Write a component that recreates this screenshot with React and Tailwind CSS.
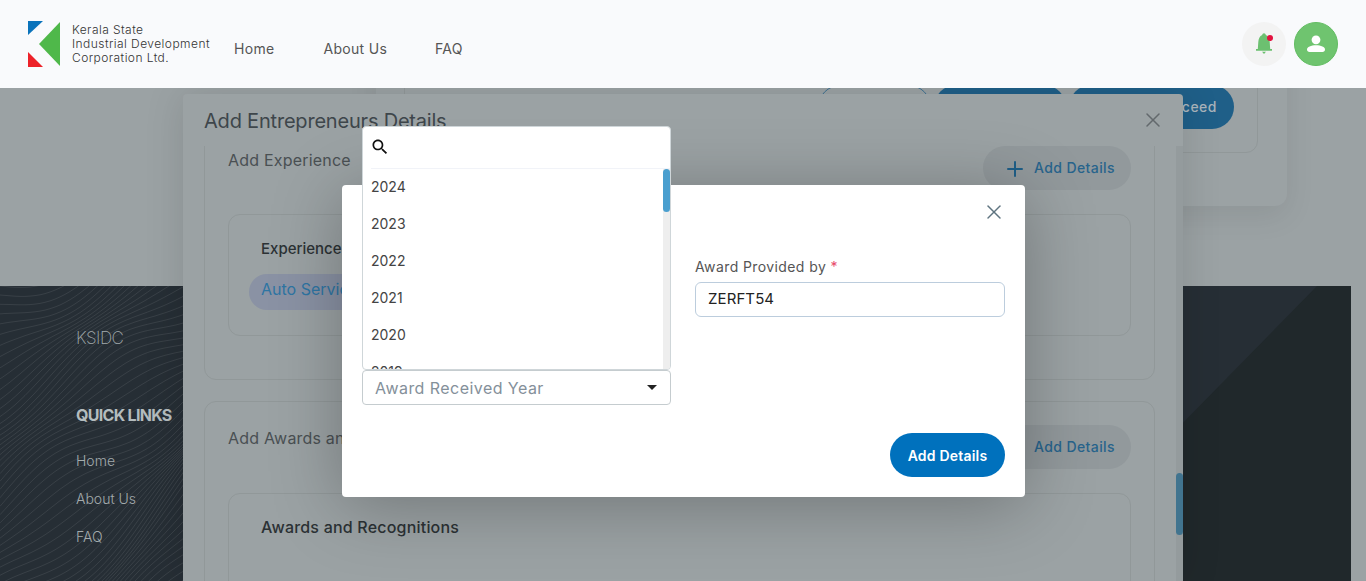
import { X, Plus } from 'lucide-react'

const years = ['2024', '2023', '2022', '2021', '2020', '2019']

// contour lines behind the footer links
const contourLines = () => {
  const lines = []
  for (let i = -4; i < 66; i++) {
    const base = i * 8.5
    let d = ''
    for (let x = 0; x <= 190; x += 5) {
      const slope = 0.42 + 0.6 * Math.min(base / 400, 1)
      const y = base - slope * x + 16 * Math.sin((x + base * 0.9) / 52) + 5 * Math.sin((x - base) / 23)
      d += `${x === 0 ? 'M' : 'L'}${x} ${y.toFixed(1)} `
    }
    lines.push(d)
  }
  return lines
}

const Header = () => (
  <header className="relative z-30 flex h-[88px] shrink-0 items-center bg-[#f9fafc] pl-[28px] pr-[28px]">
    <svg width="32" height="46" viewBox="0 0 32 46" className="shrink-0">
      <polygon points="0,0 15,0 0,14" fill="#0a73bb" />
      <polygon points="32,1 11,23 32,45" fill="#4fb84a" />
      <polygon points="0,31 15,46 0,46" fill="#ed2229" />
    </svg>
    <div className="ml-[12px] w-[150px] text-[12px] font-light leading-[14px] tracking-[0.44px] text-[#333]">
      <div>Kerala State</div>
      <div className="whitespace-nowrap">Industrial Development</div>
      <div>Corporation Ltd.</div>
    </div>
    <nav className="ml-[12px] flex gap-[48px] pt-[8px] text-[14px] tracking-[0.3px] text-[#555]">
      <span>Home</span>
      <span className="ml-[1px]">About Us</span>
      <span>FAQ</span>
    </nav>
    <div className="ml-auto flex items-center gap-[8px]">
      <div className="relative flex h-[44px] w-[44px] items-center justify-center rounded-full bg-[#f3f3f3]">
        <svg width="24" height="24" viewBox="0 0 24 24" fill="#6cc070">
          <path d="M12 1.3c-1 0-1.6.8-1.8 1.7C7.6 4 6.5 6.8 6.3 10L5.8 17H4v1.7h16V17h-1.8l-.5-7c-.2-3.2-1.3-6-3.9-7-.2-.9-.8-1.7-1.8-1.7zM10 19.7h4l-2 2.3z" />
        </svg>
        <span className="absolute left-[25px] top-[13px] h-[6px] w-[6px] rounded-full bg-[#e3123f]" />
      </div>
      <div className="flex h-[44px] w-[44px] items-center justify-center rounded-full border border-[#62bd62] bg-[#6fc46f]">
        <svg width="20" height="20" viewBox="0 0 20 20" fill="#fff">
          <circle cx="10" cy="5.8" r="4.4" />
          <path d="M1 15.5c0-2.6 4-4.2 9-4.2s9 1.6 9 4.2c0 1.6-1 2.5-2.5 2.5h-13C2 18 1 17.1 1 15.5z" />
        </svg>
      </div>
    </div>
  </header>
)

const PageBehind = () => (
  <main className="flex h-[198px] shrink-0 items-end justify-end pb-[80px] pr-[79px]">
    <div className="flex h-[200px] w-[911px] shrink-0 justify-end rounded-[12px] bg-[#9ba2a4] pr-[29px] shadow-[0_10px_30px_rgba(0,0,0,0.08)]">
      <div className="flex h-[147px] w-[854px] items-end justify-end gap-[3px] rounded-b-[12px] border border-[#919899] pb-[23px] pr-[23px]">
        <div className="h-[44px] w-[113px] rounded-full border border-[#3e7192]" />
        <div className="h-[44px] w-[132px] rounded-full bg-[#1f5f88]" />
        <div className="flex h-[44px] w-[165px] items-center justify-end rounded-full bg-[#1f5f88] pb-[2px] pr-[17px] text-[14px] font-medium tracking-[0.5px] text-[#a9b4bb]">
          Save &amp; Proceed
        </div>
      </div>
    </div>
  </main>
)

const Footer = () => (
  <footer className="relative mr-[15px] flex-1 overflow-hidden bg-[#262e35] pl-[76px] pt-[41px]">
    <svg className="absolute inset-0 h-full w-full" viewBox="0 0 1351 295" preserveAspectRatio="none">
      <polygon points="1317,0 1351,0 1351,295 1028,295" fill="#20282b" />
      {contourLines().map((d, i) => (
        <path key={i} d={d} fill="none" stroke="#ffffff" strokeOpacity="0.11" strokeWidth="0.8" />
      ))}
    </svg>
    <div className="relative">
      <div className="text-[17px] font-extralight leading-[22px] tracking-[-0.5px] text-[#a3abad]">KSIDC</div>
      <div className="mt-[55px] text-[16px] font-bold leading-[22px] tracking-[-0.7px] text-[#b4bcbe]">QUICK LINKS</div>
      <ul className="mt-[25px] flex flex-col gap-[18px] text-[14px] font-light leading-[20px] text-[#a3abad]">
        <li>Home</li>
        <li>About Us</li>
        <li>FAQ</li>
      </ul>
    </div>
  </footer>
)

const AddButton = () => (
  <div className="flex h-[44px] w-[148px] items-center gap-[7px] rounded-full bg-[#92999c] pl-[20px] text-[14px] font-medium tracking-[0.4px] text-[#28648c]">
    <Plus size={24} strokeWidth={2} className="mt-[2px] text-[#1f5f88]" />
    <span className="pb-[2px]">Add Details</span>
  </div>
)

const EntrepreneursModal = () => (
  <div className="absolute left-[183px] top-[94px] z-10 flex h-[487px] w-[1000px] flex-col rounded-t-[4px] bg-[#9ba2a4] shadow-[0_0_40px_rgba(0,0,0,0.12)]">
    <div className="flex h-[52px] shrink-0 items-center justify-between pl-[21px] pr-[18px]">
      <h2 className="pt-[1px] text-[20px] leading-[52px] tracking-[-0.2px] text-[#3e464b]">Add Entrepreneurs Details</h2>
      <X size={24} strokeWidth={1.5} className="text-[#63696d]" />
    </div>
    <div className="relative flex-1 overflow-hidden pl-[21px] pr-[28px]">
      <div className="absolute bottom-0 right-0 top-0 w-[7px] bg-[#949b9d]" />
      <div className="absolute right-0 top-[327px] h-[62px] w-[7px] rounded-full bg-[#41748f]" />

      <section className="mt-[-26px] h-[260px] rounded-[12px] border border-[#919899] px-[23px] pt-[25px]">
        <div className="flex items-start justify-between">
          <span className="mt-[2px] text-[16px] leading-[24px] tracking-[0.2px] text-[#4a5053]">Add Experience</span>
          <AddButton />
        </div>
        <div className="mt-[24px] h-[122px] rounded-[12px] border border-[#919899] pl-[20px] pt-[23px]">
          <div className="pl-[12px] text-[15px] font-medium leading-[22px] text-[#2c3235]">Experience</div>
          <div className="mt-[14px] flex h-[36px] w-[260px] items-center rounded-full bg-[#8a92a4] pb-[6px] pl-[12px] text-[16px] text-[#2e75a3]">
            Auto Service
          </div>
        </div>
      </section>

      <section className="mt-[21px] h-[300px] rounded-[12px] border border-[#919899] px-[23px] pt-[23px]">
        <div className="flex items-start justify-between">
          <span className="mt-[1px] text-[16px] leading-[24px] tracking-[0.2px] text-[#4a5053]">Add Awards and Recognitions</span>
          <AddButton />
        </div>
        <div className="mt-[24px] h-[122px] rounded-[12px] border border-[#919899] pl-[32px] pt-[22px]">
          <div className="text-[16px] font-medium leading-[22px] tracking-[0.2px] text-[#2c3235]">Awards and Recognitions</div>
        </div>
      </section>
    </div>
  </div>
)

const AwardDialog = () => (
  <div className="absolute left-[342px] top-[185px] z-20 flex h-[312px] w-[683px] flex-col rounded-[4px] bg-white px-[20px] shadow-[0_8px_70px_rgba(0,0,0,0.28)]">
    <div className="flex h-[54px] shrink-0 items-center justify-end">
      <X size={24} strokeWidth={1.5} className="mr-[-1px] text-[#5f7480]" />
    </div>
    <div className="flex flex-1 gap-[24px] pt-[18px]">
      <div className="relative w-[309px] pt-[113px]">
        <div className="absolute bottom-[63px] left-0 z-10 flex h-[244px] w-[309px] flex-col overflow-hidden rounded-[4px] border border-[#cfd6d9] bg-white">
          <div className="flex h-[41px] shrink-0 items-center pb-[2px] pl-[7px]">
            <svg width="20" height="20" viewBox="0 0 24 24" fill="#111">
              <path d="M15.5 14h-.79l-.28-.27C15.41 12.59 16 11.11 16 9.5 16 5.91 13.09 3 9.5 3S3 5.91 3 9.5 5.91 16 9.5 16c1.61 0 3.09-.59 4.23-1.57l.27.28v.79l5 4.99L20.49 19l-4.99-5zm-6 0C7.01 14 5 11.99 5 9.5S7.01 5 9.5 5 14 7.01 14 9.5 11.99 14 9.5 14z" />
            </svg>
          </div>
          <div className="relative ml-[8px] flex-1 overflow-hidden border-t border-[#f1f3f8]">
            <ul className="mt-[-1px] text-[14px] leading-[37px] text-[#444]">
              {years.map(year => (
                <li key={year} className="h-[37px]">{year}</li>
              ))}
            </ul>
            <div className="absolute bottom-0 right-0 top-0 w-[7px] bg-[#eeeeee]">
              <div className="h-[43px] w-[7px] rounded-full bg-[#4a9fcf]" />
            </div>
          </div>
        </div>
        <div className="flex h-[35px] items-center justify-between rounded-[4px] border border-[#c5cccf] pl-[12px] pr-[13px]">
          <span className="text-[16px] tracking-[0.45px] text-[#84909a]">Award Received Year</span>
          <span className="h-0 w-0 border-x-[5px] border-t-[5px] border-x-transparent border-t-[#222]" />
        </div>
      </div>
      <div className="w-[310px]">
        <label className="block text-[14px] leading-[20px] tracking-[0.4px] text-[#555]">
          Award Provided by <span className="text-[#e8476a]">*</span>
        </label>
        <div className="mt-[5px] flex h-[35px] items-center rounded-[6px] border border-[#bccddd] pl-[12px] text-[15px] tracking-[0.1px] text-[#222]">
          ZERFT54
        </div>
      </div>
    </div>
    <div className="flex justify-end pb-[20px]">
      <button className="h-[44px] w-[115px] rounded-full bg-[#0071bd] text-[14px] font-semibold tracking-[0.2px] text-white">
        Add Details
      </button>
    </div>
  </div>
)

const App = () => {
  return (
    <div className="relative flex h-[581px] w-[1366px] flex-col overflow-hidden bg-[#9ba2a4] font-[Inter,sans-serif]">
      <Header />
      <PageBehind />
      <Footer />
      <EntrepreneursModal />
      <AwardDialog />
    </div>
  )
}

export default App
